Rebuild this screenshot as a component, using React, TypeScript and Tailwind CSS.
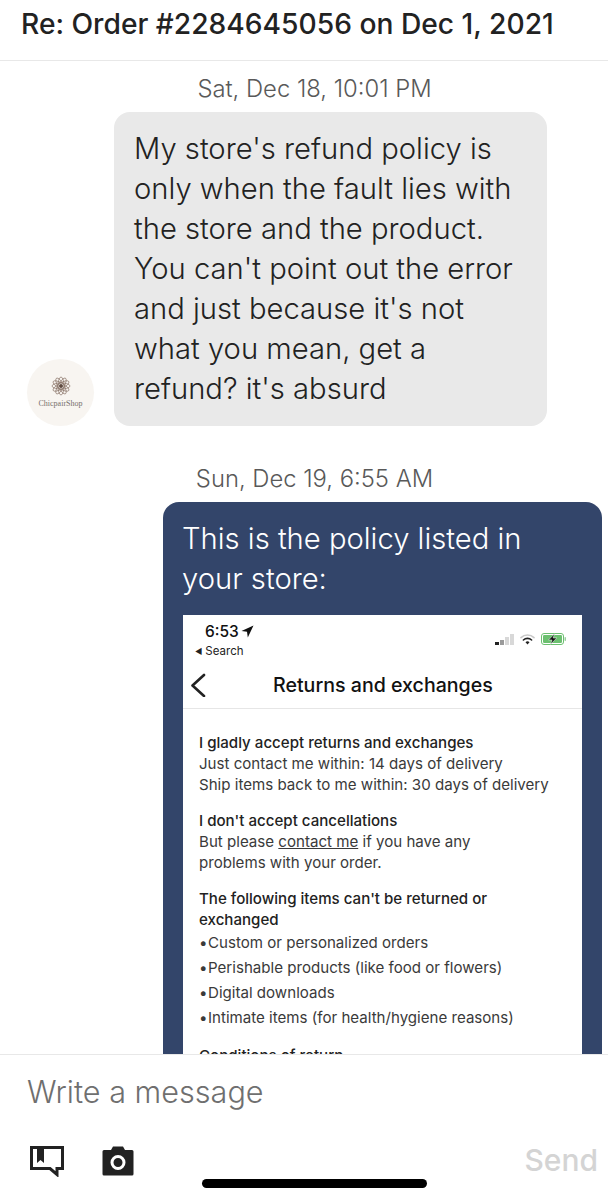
import React from 'react';

const Avatar = () => (
  <div className="flex h-[67px] w-[67px] shrink-0 flex-col items-center justify-center rounded-full bg-[#f8f5f1]">
    <svg width="20" height="20" viewBox="0 0 20 20" fill="none" stroke="#8a7468" strokeWidth="0.7">
      {[0, 30, 60, 90, 120, 150].map((a) => (
        <ellipse key={a} cx="10" cy="10" rx="3" ry="9" transform={`rotate(${a} 10 10)`} />
      ))}
      <circle cx="10" cy="10" r="2" fill="#5f4a40" stroke="none" />
    </svg>
    <span className="mt-[3px] text-[8px] leading-[10px] text-[#77706c] [font-family:'Liberation_Serif',serif]">ChicpairShop</span>
  </div>
);

const PolicySection = ({ title, children }: { title: React.ReactNode; children: React.ReactNode }) => (
  <div className="mb-[15px] text-[15.1px] leading-[21px] text-[#3a3a3a]">
    <div className="font-medium text-[#222222]">{title}</div>
    {children}
  </div>
);

const Bullet = ({ children }: { children: React.ReactNode }) => (
  <div className="flex leading-[25px]">
    <span className="w-[9px] shrink-0">•</span>
    {children}
  </div>
);

const StatusBar = () => (
  <div className="flex h-[46px] items-start justify-between pt-[7px] pl-[12px] pr-[15px]">
    <div>
      <div className="flex items-center gap-[2px] pl-[10px] text-[15.5px] leading-[19px] font-medium text-[#111111]">
        6:53
        <svg width="13" height="13" viewBox="0 0 13 13" fill="#111111">
          <path d="M12.5 0.5 L0.5 6 L6 6.8 L6.8 12.5 Z" />
        </svg>
      </div>
      <div className="mt-[4px] flex items-center gap-[3px] text-[11.5px] leading-[13px] text-[#222222]">
        <span className="text-[8px]">◀</span>Search
      </div>
    </div>
    <div className="mt-[11px] flex items-center gap-[6px]">
      <div className="flex items-end gap-[1px]">
        <span className="h-[3px] w-[4px] bg-[#222222]" />
        <span className="h-[5px] w-[4px] bg-[#9a9a9a]" />
        <span className="h-[8px] w-[4px] bg-[#d8d8d8]" />
        <span className="h-[11px] w-[4px] bg-[#d8d8d8]" />
      </div>
      <svg width="15" height="11" viewBox="0 0 15 11" fill="none" strokeLinecap="round">
        <path d="M1 3.6 A9.5 9.5 0 0 1 14 3.6" stroke="#c8c8c8" strokeWidth="1.6" />
        <path d="M3.4 6 A6 6 0 0 1 11.6 6" stroke="#222222" strokeWidth="1.6" />
        <path d="M7.5 10.5 L5.5 8.2 A3 3 0 0 1 9.5 8.2 Z" fill="#222222" />
      </svg>
      <svg width="26" height="12" viewBox="0 0 26 12">
        <rect x="0.5" y="0.5" width="22" height="11" rx="2.5" fill="#ffffff" stroke="#6cc070" />
        <rect x="2" y="2" width="19" height="8" rx="1.2" fill="#6cc070" />
        <rect x="23.5" y="4" width="1.5" height="4" rx="0.7" fill="#9ccf9f" />
        <path d="M13.5 0.8 L7.5 7 H11 L9.5 11.2 L15.8 5 H12.2 Z" fill="#111111" stroke="#ffffff" strokeWidth="0.5" />
      </svg>
    </div>
  </div>
);

const PolicyCard = () => (
  <div className="mt-[16px] bg-white">
    <StatusBar />
    <div className="flex h-[48px] items-center border-b border-[#e6e6e6] pl-[7px]">
      <svg width="16" height="24" viewBox="0 0 16 24" fill="none" stroke="#222222" strokeWidth="2.6" strokeLinecap="round" strokeLinejoin="round">
        <path d="M14 2 L2.5 12.5 L14 23" />
      </svg>
      <div className="ml-[67px] text-[19.6px] leading-[26px] font-medium text-[#111111]">Returns and exchanges</div>
    </div>
    <div className="px-[16px] pt-[23px]">
      <PolicySection title="I gladly accept returns and exchanges">
        <div>Just contact me within: 14 days of delivery</div>
        <div>Ship items back to me within: 30 days of delivery</div>
      </PolicySection>
      <PolicySection title="I don't accept cancellations">
        <div>
          But please <span className="underline">contact me</span> if you have any
        </div>
        <div>problems with your order.</div>
      </PolicySection>
      <PolicySection title={<>The following items can't be returned or<br />exchanged</>}>
        <Bullet>Custom or personalized orders</Bullet>
        <Bullet>Perishable products (like food or flowers)</Bullet>
        <Bullet>Digital downloads</Bullet>
        <Bullet>Intimate items (for health/hygiene reasons)</Bullet>
      </PolicySection>
      <div className="text-[15.1px] leading-[21px] font-medium text-[#222222]">Conditions of return</div>
    </div>
  </div>
);

export default function App() {
  return (
    <div className="flex h-[1200px] w-[608px] flex-col overflow-hidden bg-white [font-family:Inter,'Noto_Sans',sans-serif]">
      <div className="h-[61px] shrink-0 border-b border-[#e8e8e8] pl-[21px] pt-[5px] text-[28.2px] leading-[38px] font-medium text-[#222222]">
        Re: Order #2284645056 on Dec 1, 2021
      </div>

      <div className="min-h-0 flex-1 overflow-hidden">
        <div className="pl-[21px] pt-[14px] text-center text-[23.8px] leading-[28px] font-light text-[#595959]">Sat, Dec 18, 10:01 PM</div>
        <div className="mt-[9px] flex items-end pl-[27px]">
          <Avatar />
          <div className="ml-[20px] h-[314px] w-[433px] rounded-[16px] bg-[#e9e9e9] pl-[20px] pt-[17px] text-[29.2px] leading-[40px] font-light text-[#222222]">
            My store's refund policy is<br />
            only when the fault lies with<br />
            the store and the product.<br />
            You can't point out the error<br />
            and just because it's not<br />
            what you mean, get a<br />
            refund? it's absurd
          </div>
        </div>

        <div className="mt-[39px] pl-[21px] text-center text-[23.8px] leading-[28px] font-light text-[#595959]">Sun, Dec 19, 6:55 AM</div>
        <div className="ml-[163px] mt-[9px] w-[439px] rounded-t-[16px] bg-[#33456a] px-[20px] pt-[17px]">
          <div className="-ml-px text-[29.2px] leading-[40px] font-light text-white">
            This is the policy listed in<br />
            your store:
          </div>
          <PolicyCard />
        </div>
      </div>

      <div className="relative h-[146px] shrink-0 border-t border-[#e8e8e8] bg-white">
        <div className="pl-[27px] pt-[18px] text-[30.6px] leading-[38px] font-light text-[#6f6f6f]">Write a message</div>
        <div className="mt-[35px] flex items-start pl-[30px] pr-[10px]">
          <svg width="34" height="31" viewBox="0 0 34 31" fill="none">
            <path d="M1.5 1.5 H32.5 V22.5 H27 V28.5 L20 22.5 H1.5 Z" stroke="#222222" strokeWidth="3" strokeLinejoin="miter" />
            <path d="M7 2 H14 V17 L10.5 14 L7 17 Z" fill="#222222" />
          </svg>
          <svg className="ml-[38px]" width="32" height="30" viewBox="0 0 32 30">
            <path d="M2 4 H9 L11 0.5 H21 L23 4 H30 Q31.5 4 31.5 5.5 V28 Q31.5 29.5 30 29.5 H2 Q0.5 29.5 0.5 28 V5.5 Q0.5 4 2 4 Z" fill="#222222" />
            <circle cx="16" cy="16.5" r="6" fill="none" stroke="#ffffff" strokeWidth="3" />
          </svg>
          <div className="ml-auto -mt-[4px] text-[30px] leading-[36px] font-medium text-[#d4d4d4]">Send</div>
        </div>
        <div className="absolute left-[202px] top-[124px] h-[9px] w-[225px] rounded-full bg-black" />
      </div>
    </div>
  );
}
